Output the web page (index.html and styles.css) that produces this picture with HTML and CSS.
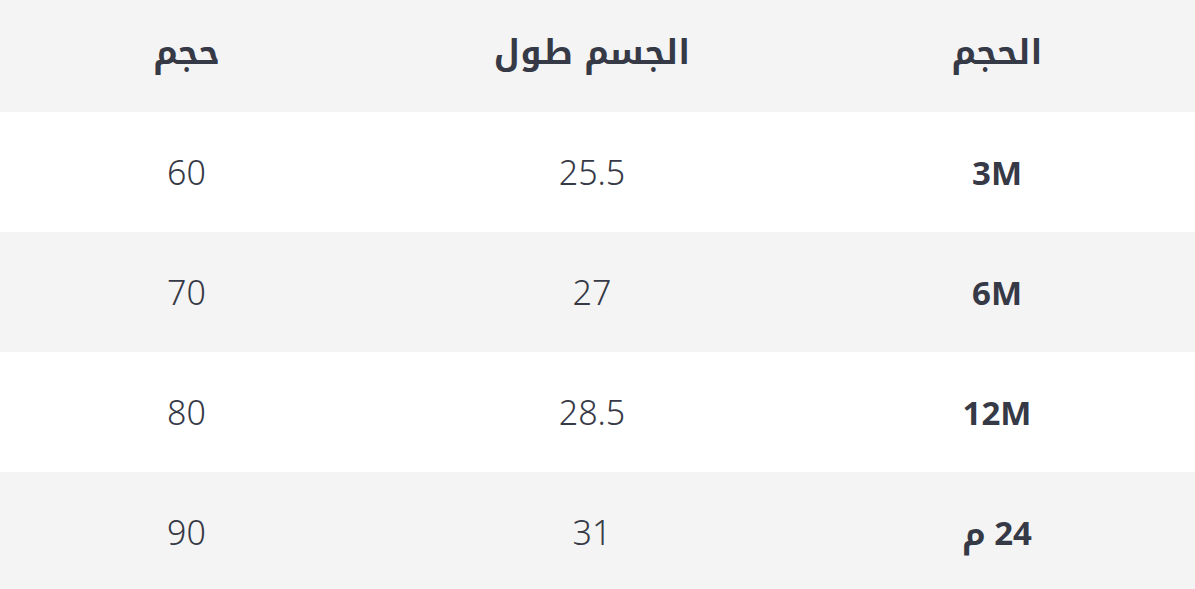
FILE: index.html
```html
<!DOCTYPE html>
<html lang="ar" dir="rtl">
<head>
<meta charset="utf-8">
<link rel="stylesheet" href="styles.css">
</head>
<body>
<div class="table">
  <div class="row head">
    <div class="cell c1">الحجم</div>
    <div class="cell c2">الجسم طول</div>
    <div class="cell c3">حجم</div>
  </div>
  <div class="row white">
    <div class="cell c1 strong">3M</div>
    <div class="cell c2">25.5</div>
    <div class="cell c3">60</div>
  </div>
  <div class="row gray">
    <div class="cell c1 strong">6M</div>
    <div class="cell c2">27</div>
    <div class="cell c3">70</div>
  </div>
  <div class="row white">
    <div class="cell c1 strong">12M</div>
    <div class="cell c2">28.5</div>
    <div class="cell c3">80</div>
  </div>
  <div class="row gray">
    <div class="cell c1 strong">24 م</div>
    <div class="cell c2">31</div>
    <div class="cell c3">90</div>
  </div>
</div>
</body>
</html>
```
FILE: styles.css
```css
html, body {
  margin: 0;
  padding: 0;
  background: #ffffff;
}
body {
  font-family: "Noto Sans", "Noto Kufi Arabic", "Noto Sans Arabic", "DejaVu Sans", sans-serif;
  color: #363946;
}
.table {
  width: 1195px;
  display: flex;
  flex-direction: column;
}
.row {
  display: grid;
  grid-template-columns: 396px 414px 385px;
  height: 120px;
  align-items: center;
}
.row.head {
  height: 112px;
  background: #f4f4f4;
  padding-bottom: 6px;
  box-sizing: border-box;
}
.row.white { background: #ffffff; }
.row.gray { background: #f4f4f4; }
.cell {
  text-align: center;
  font-size: 34px;
  font-weight: 300;
  line-height: 1;
}
.c3 { padding-right: 12px; }
.head .cell {
  font-family: "Noto Kufi Arabic", "Noto Sans Arabic", "Noto Sans", "DejaVu Sans", sans-serif;
  font-weight: 700;
  font-size: 34px;
}
.cell.strong {
  font-weight: 700;
  font-size: 33px;
}
```
